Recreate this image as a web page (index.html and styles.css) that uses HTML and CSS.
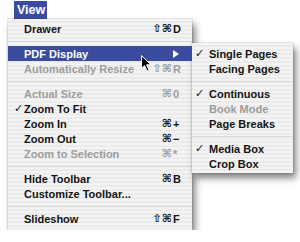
FILE: index.html
```html
<!DOCTYPE html>
<html lang="en">
<head>
    <meta charset="UTF-8">
    <title>View menu</title>
    <link rel="stylesheet" href="styles.css">
</head>
<body>
<div class="menubar">
    <span class="menu_title">View</span>
</div>
<div class="menus">
    <ul class="menu main_menu">
        <li class="item"><span class="check"></span><span class="label">Drawer</span><span class="mods">⇧⌘</span><span class="key">D</span></li>
        <li class="sep"></li>
        <li class="item active">
            <span class="check"></span><span class="label">PDF Display</span><span class="mods"></span>
            <span class="key"><svg width="6" height="8" viewBox="0 0 6 8"><path d="M0 0 L6 4 L0 8 Z" fill="#fff"/></svg></span>
            <svg class="cursor" width="12" height="17" viewBox="0 0 12 17"><path d="M0.5 0.5 L0.5 13.5 L3.5 10.5 L6 16 L8 15 L5.6 9.8 L9.8 9.8 Z" fill="#000" stroke="#fff" stroke-width="1"/></svg>
        </li>
        <li class="item disabled"><span class="check"></span><span class="label">Automatically Resize</span><span class="mods">⇧⌘</span><span class="key">R</span></li>
        <li class="sep"></li>
        <li class="item disabled"><span class="check"></span><span class="label">Actual Size</span><span class="mods">⌘</span><span class="key">0</span></li>
        <li class="item"><span class="check">✓</span><span class="label">Zoom To Fit</span><span class="mods"></span><span class="key"></span></li>
        <li class="item"><span class="check"></span><span class="label">Zoom In</span><span class="mods">⌘</span><span class="key">+</span></li>
        <li class="item"><span class="check"></span><span class="label">Zoom Out</span><span class="mods">⌘</span><span class="key">−</span></li>
        <li class="item disabled"><span class="check"></span><span class="label">Zoom to Selection</span><span class="mods">⌘</span><span class="key">*</span></li>
        <li class="sep"></li>
        <li class="item"><span class="check"></span><span class="label">Hide Toolbar</span><span class="mods">⌘</span><span class="key">B</span></li>
        <li class="item"><span class="check"></span><span class="label">Customize Toolbar...</span><span class="mods"></span><span class="key"></span></li>
        <li class="sep"></li>
        <li class="item"><span class="check"></span><span class="label">Slideshow</span><span class="mods">⇧⌘</span><span class="key">F</span></li>
    </ul>
    <ul class="menu sub_menu">
        <li class="item"><span class="check">✓</span><span class="label">Single Pages</span></li>
        <li class="item"><span class="check"></span><span class="label">Facing Pages</span></li>
        <li class="sep"></li>
        <li class="item"><span class="check">✓</span><span class="label">Continuous</span></li>
        <li class="item disabled"><span class="check"></span><span class="label">Book Mode</span></li>
        <li class="item"><span class="check"></span><span class="label">Page Breaks</span></li>
        <li class="sep"></li>
        <li class="item"><span class="check">✓</span><span class="label">Media Box</span></li>
        <li class="item"><span class="check"></span><span class="label">Crop Box</span></li>
    </ul>
</div>
</body>
</html>
```

FILE: styles.css
```css
* {
    box-sizing: border-box;
}

body {
    margin: 0;
    background: #fff;
    font-family: "Liberation Sans", Arial, sans-serif;
    font-weight: bold;
    color: #141414;
}

.menubar {
    height: 19px;
    padding-left: 14px;
}

.menu_title {
    display: inline-block;
    height: 18px;
    width: 33px;
    padding: 2px 0 0 3px;
    background: #3b4b9f;
    color: #fff;
    font-size: 12.5px;
}

.menus {
    display: flex;
    align-items: flex-start;
}

.menu {
    list-style: none;
    margin: 0;
    background: repeating-linear-gradient(#f4f4f4 0, #f4f4f4 2px, #ebebeb 2px, #ebebeb 4px);
    box-shadow: 0 0 0 1px rgba(0, 0, 0, 0.08), 3px 5px 7px rgba(0, 0, 0, 0.5);
    font-size: 11px;
}

.main_menu {
    width: 184px;
    margin-left: 8px;
    padding: 2px 0 4px 0;
}

.sub_menu {
    width: 101px;
    margin-top: 24px;
    padding: 3px 0 2px 0;
}

.item {
    display: flex;
    align-items: center;
    height: 15px;
    white-space: nowrap;
    position: relative;
}

.main_menu .item {
    padding-right: 8px;
}

.check {
    width: 16px;
    padding-left: 6px;
    font-family: "DejaVu Sans", sans-serif;
    font-size: 11px;
}

.sub_menu .check {
    width: 17px;
    padding-left: 3px;
}

.label {
    flex: 1;
}

.mods {
    font-family: "DejaVu Sans", sans-serif;
    font-size: 11px;
    text-align: right;
}

.key {
    width: 12px;
    padding-left: 1px;
    display: flex;
    align-items: center;
}

.active {
    background: #3b4b9f;
    color: #fff;
}

.disabled {
    color: #9c9c9c;
}

.sep {
    height: 10px;
    display: flex;
    align-items: center;
}

.sep::after {
    content: "";
    flex: 1;
    height: 1px;
    background: #d9d9d9;
}

.cursor {
    position: absolute;
    left: 133px;
    top: 9px;
}
```
